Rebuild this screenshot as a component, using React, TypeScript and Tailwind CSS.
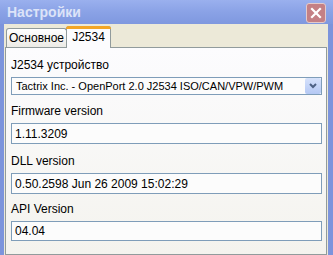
export default function App() {
  const font = { fontFamily: '"Liberation Sans", Arial, sans-serif' };
  return (
    <div className="w-[333px] h-[255px] overflow-hidden flex flex-col bg-[#ECE9D8] text-black" style={font}>
      {/* title bar */}
      <div className="h-[24px] shrink-0 flex items-center justify-between pl-[7px] pr-[7px] bg-gradient-to-b from-[#9AB0EE] via-[#8AA2E6] to-[#7F98DF]">
        <span className="text-[14px] font-bold text-[#DCE3F8] leading-[16px]">Настройки</span>
        <div className="w-[20px] h-[20px] mt-[1px] rounded-[3px] border border-[#E4CACA] bg-[#C48085] flex items-center justify-center">
          <svg width="12" height="12" viewBox="0 0 12 12">
            <path d="M2 2 L10 10 M10 2 L2 10" stroke="#fff" strokeWidth="2.2" strokeLinecap="square" />
          </svg>
        </div>
      </div>

      <div className="flex-1 flex border-l-[4px] border-r-[5px] border-[#7C94DC]">
        <div className="flex-1 flex flex-col pl-[1px] pr-[1px]">
          {/* tabs */}
          <div className="h-[23px] flex items-end pl-[1px]">
            <div className="h-[19px] w-[61px] border border-b-0 border-[#919B9C] rounded-t-[3px] bg-gradient-to-b from-white to-[#ECEBE6] text-[12px] flex items-center justify-center">
              Основное
            </div>
            <div className="h-[22px] w-[45px] -ml-[1px] border border-b-0 border-[#919B9C] rounded-t-[3px] bg-[#FCFCFE] text-[12px] flex flex-col relative -mb-[1px]">
              <div className="absolute -top-[1px] -left-[1px] -right-[1px] h-[3px] rounded-t-[3px] bg-[#F3A626]" />
              <div className="flex-1 flex items-center justify-center pb-[2px]">J2534</div>
            </div>
          </div>
          {/* panel */}
          <div className="flex-1 border border-[#919B9C] bg-gradient-to-b from-[#FCFCFE] to-[#F4F3EE] pl-[5px] pr-[4px] pt-[10px] text-[12px]">
            <div className="leading-[14px]">J2534 устройство</div>
            <div className="mt-[5px] h-[18px] border border-[#7F9DB9] bg-[#FCFCFC] flex items-center">
              <span className="flex-1 pl-[4px] leading-[14px] whitespace-nowrap text-[11px]">Tactrix Inc. - OpenPort 2.0 J2534 ISO/CAN/VPW/PWM</span>
              <div className="w-[16px] h-[16px] rounded-[2px] bg-gradient-to-b from-[#D6E2FB] to-[#B4C8F4] flex items-center justify-center">
                <svg width="8" height="6" viewBox="0 0 8 6">
                  <path d="M1 1 L4 4 L7 1" stroke="#4D6185" strokeWidth="2" fill="none" />
                </svg>
              </div>
            </div>
            <div className="mt-[9px] leading-[14px]">Firmware version</div>
            <div className="mt-[5px] h-[21px] border border-[#7F9DB9] bg-[#FCFCFC] flex items-center pl-[3px] leading-[14px]">1.11.3209</div>
            <div className="mt-[10px] leading-[14px]">DLL version</div>
            <div className="mt-[5px] h-[21px] border border-[#7F9DB9] bg-[#FCFCFC] flex items-center pl-[3px] leading-[14px]">0.50.2598 Jun 26 2009 15:02:29</div>
            <div className="mt-[8px] leading-[14px]">API Version</div>
            <div className="mt-[5px] h-[20px] border border-[#7F9DB9] bg-[#FCFCFC] flex items-center pl-[3px] leading-[14px]">04.04</div>
          </div>
        </div>
      </div>
    </div>
  );
}
